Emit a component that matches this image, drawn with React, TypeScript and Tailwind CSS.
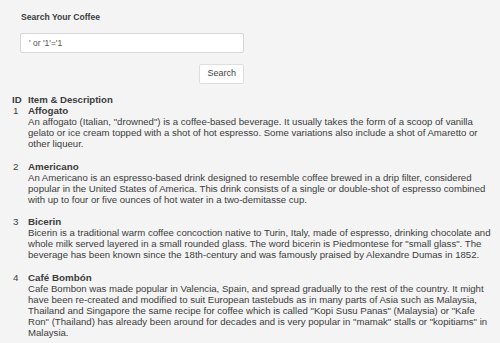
import React from 'react';

// lines broken where the reference breaks them
const coffees = [
  {
    id: 1,
    name: 'Affogato',
    lines: [
      'An affogato (Italian, "drowned") is a coffee-based beverage. It usually takes the form of a scoop of vanilla',
      'gelato or ice cream topped with a shot of hot espresso. Some variations also include a shot of Amaretto or',
      'other liqueur.',
    ],
  },
  {
    id: 2,
    name: 'Americano',
    lines: [
      'An Americano is an espresso-based drink designed to resemble coffee brewed in a drip filter, considered',
      'popular in the United States of America. This drink consists of a single or double-shot of espresso combined',
      'with up to four or five ounces of hot water in a two-demitasse cup.',
    ],
  },
  {
    id: 3,
    name: 'Bicerin',
    lines: [
      'Bicerin is a traditional warm coffee concoction native to Turin, Italy, made of espresso, drinking chocolate and',
      'whole milk served layered in a small rounded glass. The word bicerin is Piedmontese for "small glass". The',
      'beverage has been known since the 18th-century and was famously praised by Alexandre Dumas in 1852.',
    ],
  },
  {
    id: 4,
    name: 'Café Bombón',
    lines: [
      'Cafe Bombon was made popular in Valencia, Spain, and spread gradually to the rest of the country. It might',
      'have been re-created and modified to suit European tastebuds as in many parts of Asia such as Malaysia,',
      'Thailand and Singapore the same recipe for coffee which is called "Kopi Susu Panas" (Malaysia) or "Kafe',
      'Ron" (Thailand) has already been around for decades and is very popular in "mamak" stalls or "kopitiams" in',
      'Malaysia.',
    ],
  },
];

export default function App() {
  return (
    <div className="w-[500px] h-[343px] overflow-hidden bg-[#f4f4f4] text-[#3c3c3c] font-['Liberation_Sans',Arial,sans-serif]">
      <div className="pl-[20px] pt-[11px] w-[244px]">
        <h1 className="text-[8.6px] font-bold leading-[12px] pl-[1px]">Search Your Coffee</h1>
        <div className="mt-[10px] h-[20px] bg-white border border-[#d8d8d8] rounded-[2px] flex items-center pl-[8px] text-[8.5px] text-[#555]">
          ' or '1'='1
        </div>
        <div className="mt-[11px] flex justify-end">
          <button className="h-[20px] px-[7px] bg-white border border-[#dedede] rounded-[2px] text-[9px] text-[#444]">
            Search
          </button>
        </div>
      </div>

      <div className="mt-[10px] pl-[12px] pr-[12px] text-[9.6px] leading-[11px]">
        <div className="grid grid-cols-[16px_1fr] font-bold text-[9.6px]">
          <div>ID</div>
          <div>Item &amp; Description</div>
        </div>
        {coffees.map((c) => (
          <div key={c.id} className="grid grid-cols-[16px_1fr] mb-[11.5px]">
            <div className="pl-[1px] text-[9.8px]">{c.id}</div>
            <div>
              <div className="font-bold text-[9.8px]">{c.name}</div>
              {c.lines.map((l, i) => (
                <div key={i} className="whitespace-nowrap">{l}</div>
              ))}
            </div>
          </div>
        ))}
      </div>
    </div>
  );
}
